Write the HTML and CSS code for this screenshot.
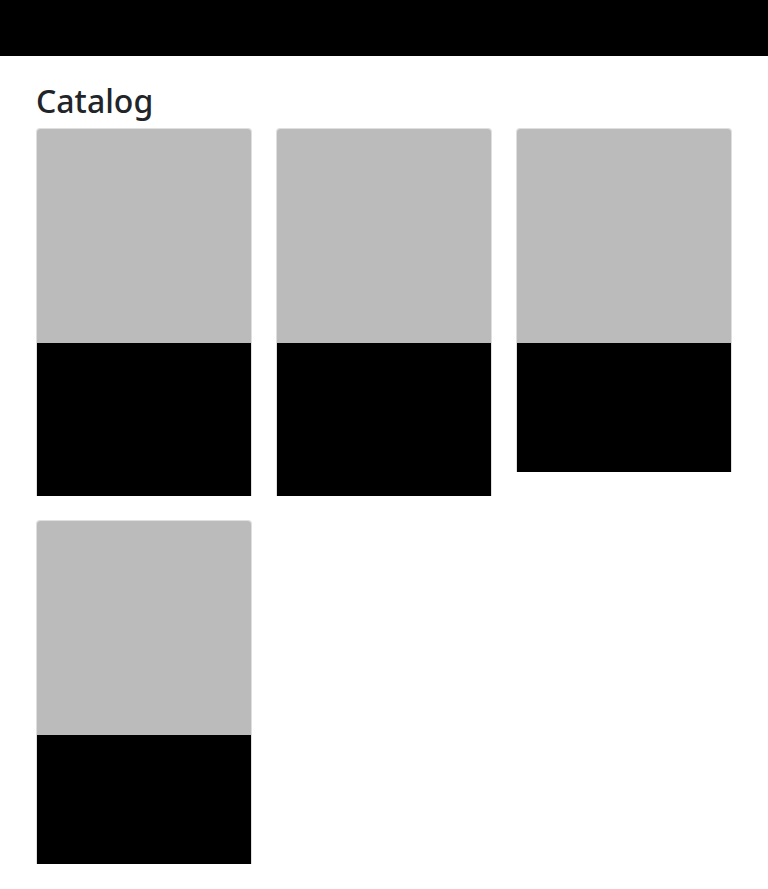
FILE: index.html
```html
<!DOCTYPE html>
<html lang="en">
<head>
    <meta charset="UTF-8">
    <meta name="viewport" content="width=device-width, initial-scale=1.0">
    <title>Catalog</title>
    <link rel="stylesheet" href="styles.css">
</head>
<body>
    <nav class="navbar"></nav>

    <main class="container">
        <h2 class="page-title">Catalog</h2>
        <div class="catalog">
            <div class="card">
                <div class="card-img"></div>
                <div class="card-body">
                    <h5 class="card-title">Product one</h5>
                    <p class="card-text">Short description line</p>
                    <p class="card-text">Short description line</p>
                    <p class="card-text">Short description line</p>
                    <p class="card-text">$19.99</p>
                </div>
            </div>
            <div class="card">
                <div class="card-img"></div>
                <div class="card-body">
                    <h5 class="card-title">Product two</h5>
                    <p class="card-text">Short description line</p>
                    <p class="card-text">Short description line</p>
                    <p class="card-text">Short description line</p>
                    <p class="card-text">$24.99</p>
                </div>
            </div>
            <div class="card">
                <div class="card-img"></div>
                <div class="card-body">
                    <h5 class="card-title">Product three</h5>
                    <p class="card-text">Short description line</p>
                    <p class="card-text">Short description line</p>
                    <p class="card-text">$9.99</p>
                </div>
            </div>
            <div class="card">
                <div class="card-img"></div>
                <div class="card-body">
                    <h5 class="card-title">Product four</h5>
                    <p class="card-text">Short description line</p>
                    <p class="card-text">Short description line</p>
                    <p class="card-text">$14.99</p>
                </div>
            </div>
        </div>
    </main>
</body>
</html>
```

FILE: styles.css
```css
body {
    margin: 0;
    font-family: 'Noto Sans', 'Open Sans', sans-serif;
    color: #212529;
    background-color: #fff;
}

.navbar {
    height: 56px;
    background-color: #000;
}

.container {
    padding: 26px 36px 24px;
}

.page-title {
    margin: 0 0 8px;
    font-size: 32px;
    font-weight: 500;
    line-height: 1.2;
}

.catalog {
    display: grid;
    grid-template-columns: repeat(3, 216px);
    column-gap: 24px;
    row-gap: 24px;
    align-items: start;
}

.card {
    border: 1px solid #dfdfdf;
    border-bottom: none;
    border-radius: 4px 4px 0 0;
    overflow: hidden;
}

.card-img {
    height: 214px;
    background-color: #bbb;
}

.card-body {
    background-color: #000;
    color: #000; /* text hidden on black */
    padding: 16px 16px 17px;
}

.card-title,
.card-text {
    margin: 0;
    font-size: 16px;
    line-height: 24px;
    font-weight: 400;
    white-space: nowrap;
    overflow: hidden;
}
```
